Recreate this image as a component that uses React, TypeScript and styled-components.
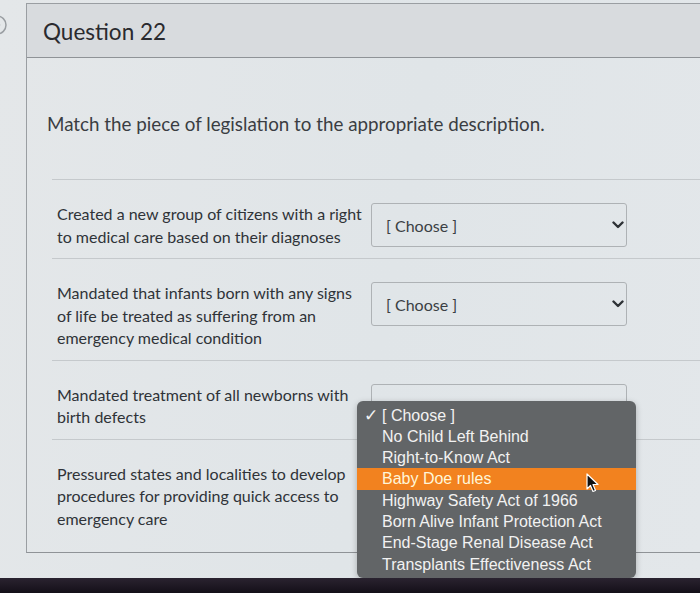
import { createGlobalStyle, styled } from 'styled-components';

const GlobalStyle = createGlobalStyle`
  html, body {
    margin: 0;
    padding: 0;
    background: #1b1620;
  }
  body {
    font-family: Lato, "Open Sans", sans-serif;
    color: #2d3b45;
  }
`;

const Frame = styled.div`
  width: 700px;
  height: 593px;
  display: flex;
  flex-direction: column;
  overflow: hidden;
`;

const Screen = styled.div`
  flex: 0 0 578px;
  display: flex;
  overflow: hidden;
  background: linear-gradient(100deg, #e4e7e9 0%, #e0e5e8 55%, #e3e7ea 100%);
`;

const Bezel = styled.div`
  flex: 1;
  background: linear-gradient(180deg, #2a2330 0%, #140f18 100%);
`;

const Side = styled.div`
  flex: 0 0 26px;
  padding-top: 14px;
`;

const NavIcon = styled.svg`
  display: block;
  margin-left: -14px;
`;

const Card = styled.div`
  flex: 1;
  margin-top: 3px;
  align-self: flex-start;
  border-top: 1px solid #9a9ea2;
  border-left: 1px solid #9a9ea2;
  border-bottom: 1px solid #8f9397;
`;

const Header = styled.div`
  height: 54px;
  display: flex;
  align-items: center;
  padding: 2px 0 0 16px;
  box-sizing: border-box;
  background: #d8dbde;
  border-bottom: 1px solid #8f9397;
  font-size: 22.5px;
  color: #2a2a2e;
`;

const Body = styled.div`
  padding: 0 0 12px 20px;
`;

const Prompt = styled.p`
  margin: 54px 0 43px;
  font-size: 18.8px;
  line-height: 24px;
  color: #3a3d42;
`;

const Rows = styled.div`
  margin-left: 5px;
`;

const Row = styled.div`
  display: grid;
  grid-template-columns: 308px 256px;
  column-gap: 6px;
  align-items: start;
  padding: 23px 0 10px 5px;
  border-top: 1px solid #c5c9cc;
`;

const Description = styled.div`
  font-size: 16px;
  line-height: 22.5px;
  color: #2f3338;
`;

const SelectWrap = styled.div`
  position: relative;
`;

const SelectBox = styled.div`
  height: 44px;
  box-sizing: border-box;
  display: flex;
  align-items: center;
  justify-content: space-between;
  padding: 0 2px 0 14px;
  border: 1px solid #aeb2b5;
  border-radius: 3px;
  font-size: 16px;
  color: #3b3f44;
`;

const Chevron = styled.svg`
  display: block;
`;

const Menu = styled.ul`
  position: absolute;
  left: -14px;
  top: 17px;
  width: 279px;
  margin: 0;
  padding: 4px 0 3px;
  list-style: none;
  background: #626567;
  border-radius: 6px;
  box-shadow: 0 2px 6px rgba(0, 0, 0, 0.25);
  font-family: "Liberation Sans", Arial, sans-serif;
  font-size: 16px;
  z-index: 2;
`;

const MenuItem = styled.li<{ $active?: boolean }>`
  position: relative;
  height: 21.3px;
  line-height: 21.3px;
  padding-left: 25px;
  color: ${(p) => (p.$active ? '#fff6d8' : '#f2f2f2')};
  background: ${(p) => (p.$active ? '#f2821f' : 'transparent')};
`;

const Check = styled.span`
  position: absolute;
  left: 7px;
  top: 0;
  font-size: 17px;
`;

const Cursor = styled.svg`
  position: absolute;
  left: 229px;
  top: 5px;
`;

const rows = [
  'Created a new group of citizens with a right to medical care based on their diagnoses',
  'Mandated that infants born with any signs of life be treated as suffering from an emergency medical condition',
  'Mandated treatment of all newborns with birth defects',
  'Pressured states and localities to develop procedures for providing quick access to emergency care',
];

const options = [
  '[ Choose ]',
  'No Child Left Behind',
  'Right-to-Know Act',
  'Baby Doe rules',
  'Highway Safety Act of 1966',
  'Born Alive Infant Protection Act',
  'End-Stage Renal Disease Act',
  'Transplants Effectiveness Act',
];

function Select({ open }: { open?: boolean }) {
  return (
    <SelectWrap>
      <SelectBox>
        {open ? <span /> : <span>[ Choose ]</span>}
        <Chevron width="12" height="8" viewBox="0 0 12 8">
          <path d="M1.5 1.5 L6 6 L10.5 1.5" fill="none" stroke="#2e3236" strokeWidth="2.4" strokeLinecap="round" strokeLinejoin="round" />
        </Chevron>
      </SelectBox>
      {open && (
        <Menu>
          {options.map((o, i) => (
            <MenuItem key={o} $active={i === 3}>
              {i === 0 && <Check>✓</Check>}
              {o}
              {i === 3 && (
                <Cursor width="14" height="20" viewBox="0 0 14 20">
                  <path d="M1 1 L1 16 L4.5 12.5 L7 18.5 L9.5 17.5 L7 11.5 L12 11.5 Z" fill="#111" stroke="#fff" strokeWidth="1.2" strokeLinejoin="round" />
                </Cursor>
              )}
            </MenuItem>
          ))}
        </Menu>
      )}
    </SelectWrap>
  );
}

export default function App() {
  return (
    <>
      <GlobalStyle />
      <Frame>
        <Screen>
          <Side>
            <NavIcon width="22" height="22" viewBox="0 0 22 22">
              <circle cx="11" cy="11" r="9" fill="none" stroke="#9a9ea2" strokeWidth="1.5" />
              <path d="M9 6.5 L13.5 11 L9 15.5" fill="none" stroke="#9a9ea2" strokeWidth="1.5" />
            </NavIcon>
          </Side>
          <Card>
            <Header>Question 22</Header>
            <Body>
              <Prompt>Match the piece of legislation to the appropriate description.</Prompt>
              <Rows>
                {rows.map((text, i) => (
                  <Row key={i}>
                    <Description>{text}</Description>
                    {i < 3 ? <Select open={i === 2} /> : <div />}
                  </Row>
                ))}
              </Rows>
            </Body>
          </Card>
        </Screen>
        <Bezel />
      </Frame>
    </>
  );
}
